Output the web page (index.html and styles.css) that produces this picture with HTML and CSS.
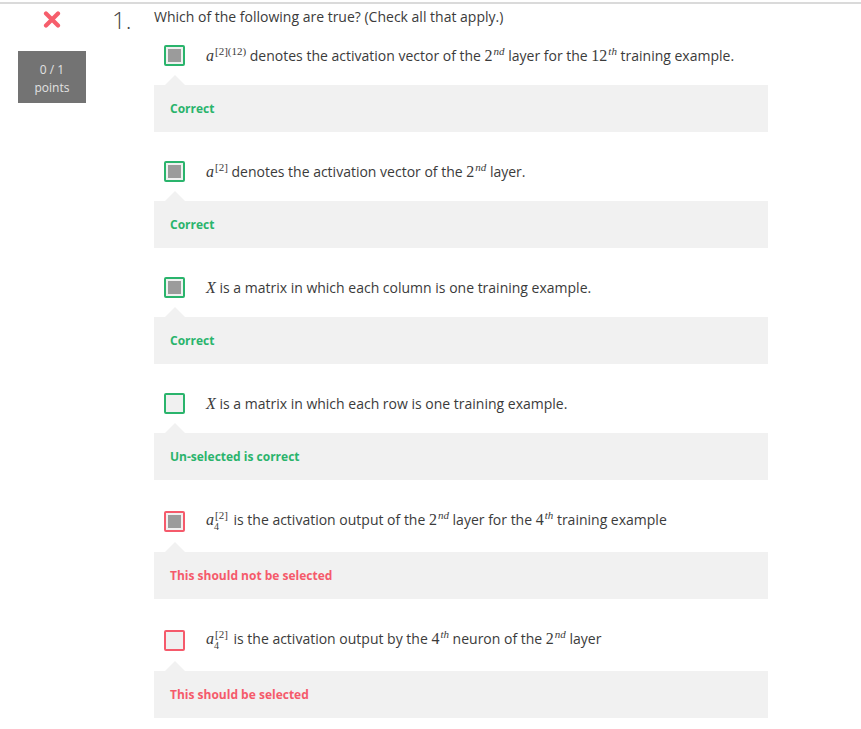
FILE: index.html
```html
<!DOCTYPE html>
<html>
<head>
<meta charset="utf-8">
<link rel="stylesheet" href="styles.css">
</head>
<body>
<div class="page">
  <div class="question">
    <div class="side">
      <svg class="xicon" width="18" height="17" viewBox="0 0 18 17"><path d="M3 2.5 L15 14.5 M15 2.5 L3 14.5" stroke="#f65e6c" stroke-width="4.2" stroke-linecap="round"/></svg>
      <div class="score"><div>0 / 1</div><div>points</div></div>
    </div>
    <div class="num">1.</div>
    <div class="content">
      <div class="prompt">Which of the following are true? (Check all that apply.)</div>

      <div class="option">
        <span class="box ok checked"><span class="fill"></span></span>
        <span class="text"><span class="m"><i>a</i><sup>[2](12)</sup></span> denotes the activation vector of the <span class="m">2<sup><i>nd</i></sup></span> layer for the <span class="m">12<sup><i>th</i></sup></span> training example.</span>
      </div>
      <div class="feedback good">Correct</div>

      <div class="option">
        <span class="box ok checked"><span class="fill"></span></span>
        <span class="text"><span class="m"><i>a</i><sup>[2]</sup></span> denotes the activation vector of the <span class="m">2<sup><i>nd</i></sup></span> layer.</span>
      </div>
      <div class="feedback good">Correct</div>

      <div class="option">
        <span class="box ok checked"><span class="fill"></span></span>
        <span class="text"><span class="m"><i>X</i></span> is a matrix in which each column is one training example.</span>
      </div>
      <div class="feedback good">Correct</div>

      <div class="option">
        <span class="box ok"></span>
        <span class="text"><span class="m"><i>X</i></span> is a matrix in which each row is one training example.</span>
      </div>
      <div class="feedback good">Un-selected is correct</div>

      <div class="option tall">
        <span class="box bad checked"><span class="fill"></span></span>
        <span class="text"><span class="m"><i>a</i><span class="supsub"><span class="sp">[2]</span><span class="sb">4</span></span></span> is the activation output of the <span class="m">2<sup><i>nd</i></sup></span> layer for the <span class="m">4<sup><i>th</i></sup></span> training example</span>
      </div>
      <div class="feedback wrong">This should not be selected</div>

      <div class="option tall">
        <span class="box bad"></span>
        <span class="text"><span class="m"><i>a</i><span class="supsub"><span class="sp">[2]</span><span class="sb">4</span></span></span> is the activation output by the <span class="m">4<sup><i>th</i></sup></span> neuron of the <span class="m">2<sup><i>nd</i></sup></span> layer</span>
      </div>
      <div class="feedback wrong">This should be selected</div>
    </div>
  </div>
</div>
</body>
</html>
```

FILE: styles.css
```css
html, body {
  margin: 0;
  padding: 0;
  background: #ffffff;
}

body {
  font-family: "Open Sans", "Liberation Sans", sans-serif;
  color: #3b3b3b;
}

.page {
  padding-top: 2px;
}

.question {
  display: flex;
  border-top: 2px solid #dadada;
}

.side {
  width: 104px;
  display: flex;
  flex-direction: column;
  align-items: center;
  padding-top: 7px;
}

.xicon {
  display: block;
}

.score {
  margin-top: 23px;
  width: 68px;
  height: 52px;
  box-sizing: border-box;
  padding-top: 3px;
  background: #737373;
  color: #e2e2e2;
  font-size: 12px;
  line-height: 18px;
  display: flex;
  flex-direction: column;
  align-items: center;
  justify-content: center;
}

.num {
  width: 50px;
  box-sizing: border-box;
  padding-left: 8px;
  padding-top: 2px;
  font-size: 24px;
  font-weight: 300;
  line-height: 28px;
  color: #444;
}

.content {
  width: 614px;
  padding-top: 3px;
}

.prompt {
  font-size: 14px;
  line-height: 20px;
  margin-bottom: 18px;
}

.option {
  display: flex;
  align-items: center;
  min-height: 21px;
  margin-bottom: 19px;
  padding-left: 10px;
}

.option.tall {
  min-height: 24px;
}

.box {
  width: 21px;
  height: 21px;
  box-sizing: border-box;
  border: 2px solid #2ab46c;
  border-radius: 2px;
  background: #f0f0f0;
  display: flex;
  align-items: center;
  justify-content: center;
  flex: none;
}

.box.bad {
  border-color: #f55a6b;
}

.fill {
  width: 13px;
  height: 13px;
  background: #9b9b9b;
}

.text {
  margin-left: 21px;
  font-size: 14px;
  line-height: 18px;
}

.m {
  font-family: "Liberation Serif", "DejaVu Serif", serif;
  font-size: 16px;
  line-height: 1;
}

.m i {
  font-style: italic;
}

.m sup {
  font-size: 11px;
  vertical-align: 6px;
  line-height: 0;
  margin-left: 1px;
}

.supsub {
  display: inline-block;
  vertical-align: -5px;
  font-size: 11px;
  line-height: 11px;
  margin-left: 1px;
  margin-right: 2px;
}

.supsub .sp,
.supsub .sb {
  display: block;
}

.supsub .sb {
  font-size: 10px;
  margin-left: -1px;
}

.feedback {
  position: relative;
  background: #f1f1f1;
  height: 47px;
  box-sizing: border-box;
  padding-left: 16px;
  display: flex;
  align-items: center;
  font-size: 12px;
  font-weight: 700;
  margin-bottom: 29px;
}

.feedback::before {
  content: "";
  position: absolute;
  left: 11px;
  top: -10px;
  border-left: 10px solid transparent;
  border-right: 10px solid transparent;
  border-bottom: 10px solid #f1f1f1;
}

.feedback.good {
  color: #2ab46c;
}

.feedback.wrong {
  color: #f55a6b;
}
```
